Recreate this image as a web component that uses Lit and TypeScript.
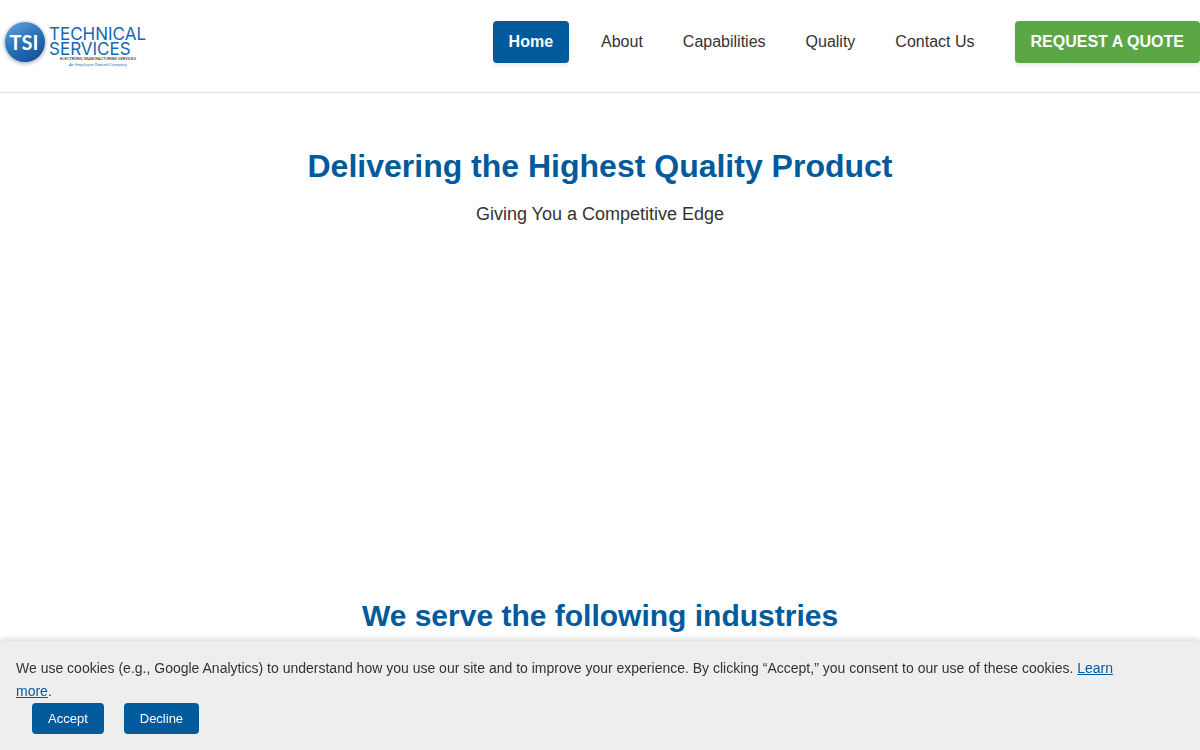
import { LitElement, html, css, svg } from "lit";
import { customElement, state } from "lit/decorators.js";

const NAV = ["Home", "About", "Capabilities", "Quality", "Contact Us"];

const logo = svg`
  <defs>
    <linearGradient id="ball" x1="0.2" y1="0" x2="0.8" y2="1">
      <stop offset="0" stop-color="#5f9fd8" />
      <stop offset="0.45" stop-color="#2c75bb" />
      <stop offset="1" stop-color="#124f97" />
    </linearGradient>
    <radialGradient id="halo">
      <stop offset="0.8" stop-color="#9aa6b5" stop-opacity="0.7" />
      <stop offset="1" stop-color="#c4ccd6" stop-opacity="0" />
    </radialGradient>
  </defs>
  <circle cx="25" cy="25" r="24" fill="url(#halo)" />
  <circle cx="25" cy="24" r="20" fill="url(#ball)" />
  <text class="mark" x="24" y="32" text-anchor="middle">TSI</text>
  <text class="word" x="49" y="22">TECHNICAL</text>
  <text class="word" x="49" y="37">SERVICES</text>
  <text class="line" x="98" y="42" text-anchor="middle">ELECTRONIC MANUFACTURING SERVICES</text>
  <text class="tag" x="98" y="48" text-anchor="middle">An Employee Owned Company</text>
`;

@customElement("app-root")
export class AppRoot extends LitElement {
  @state() private cookiesAnswered = false;

  static styles = css`
    :host {
      display: block;
      font: 16px/26px "Liberation Sans", Arial, sans-serif;
      color: #333;
      background: #fff;
    }
    header {
      display: flex;
      justify-content: space-between;
      align-items: flex-start;
      padding: 18px 0 20px;
      border-bottom: 1px solid #e0e0e0;
    }
    .logo {
      display: block;
      width: 150px;
      height: 54px;
    }
    .mark {
      font: bold 20px "Lato", sans-serif;
      fill: #fff;
    }
    .word {
      font: 17px "Inter", sans-serif;
      fill: #1467b3;
    }
    .line {
      font: 4px "Roboto", sans-serif;
      fill: #000;
    }
    .tag {
      font: 4px "Noto Sans", sans-serif;
      fill: #1467b3;
    }
    nav {
      display: flex;
      gap: 8px;
      padding-top: 3px;
    }
    nav a {
      padding: 8px 16px;
      border-radius: 4px;
      color: #333;
      text-decoration: none;
      white-space: nowrap;
    }
    nav a.active,
    nav a.quote {
      font-weight: bold;
      color: #fff;
      box-shadow: 0 2px 4px rgba(0, 0, 0, 0.1);
    }
    nav a.active {
      background: #005a9c;
      margin-right: 8px;
    }
    nav a.quote {
      background: #5ba746;
      margin-left: 16px;
    }
    .hero {
      min-height: 400px;
      padding-top: 48px;
      text-align: center;
    }
    h1,
    h2 {
      margin: 0;
      color: #005a9c;
      text-align: center;
      line-height: 50px;
    }
    h1 {
      font-size: 32px;
    }
    .hero p {
      margin: 9px 0 0;
      font-size: 18px;
      line-height: 28px;
    }
    h2 {
      padding-top: 50px;
      font-size: 30px;
    }
    .cookies {
      position: fixed;
      inset: auto 0 0;
      padding: 16px;
      background: #eee;
      box-shadow: 0 -2px 5px rgba(0, 0, 0, 0.15);
      font-size: 14px;
      line-height: 23px;
    }
    .cookies p {
      margin: 0;
      padding-right: 40px;
    }
    .cookies a {
      color: #005a9c;
    }
    .actions {
      display: flex;
      gap: 20px;
      padding-left: 16px;
    }
    button {
      padding: 8px 16px;
      border: 0;
      border-radius: 4px;
      background: #005a9c;
      color: #fff;
      font: 13px/15px "Liberation Sans", Arial, sans-serif;
      cursor: pointer;
    }
  `;

  private answer() {
    this.cookiesAnswered = true;
  }

  render() {
    return html`
      <header>
        <svg class="logo" viewBox="0 0 150 54" role="img" aria-label="TSI Technical Services">${logo}</svg>
        <nav>
          ${NAV.map((item, i) => html`<a href="#" class=${i === 0 ? "active" : ""}>${item}</a>`)}
          <a href="#" class="quote">REQUEST A QUOTE</a>
        </nav>
      </header>
      <main>
        <section class="hero">
          <h1>Delivering the Highest Quality Product</h1>
          <p>Giving You a Competitive Edge</p>
        </section>
        <section>
          <h2>We serve the following industries</h2>
        </section>
      </main>
      ${this.cookiesAnswered
        ? ""
        : html`<aside class="cookies" aria-label="Cookie notice">
            <p>
              We use cookies (e.g., Google Analytics) to understand how you use our site and to improve your
              experience. By clicking “Accept,” you consent to our use of these cookies.
              <a href="#">Learn more</a>.
            </p>
            <div class="actions">
              <button type="button" @click=${this.answer}>Accept</button>
              <button type="button" @click=${this.answer}>Decline</button>
            </div>
          </aside>`}
    `;
  }
}
